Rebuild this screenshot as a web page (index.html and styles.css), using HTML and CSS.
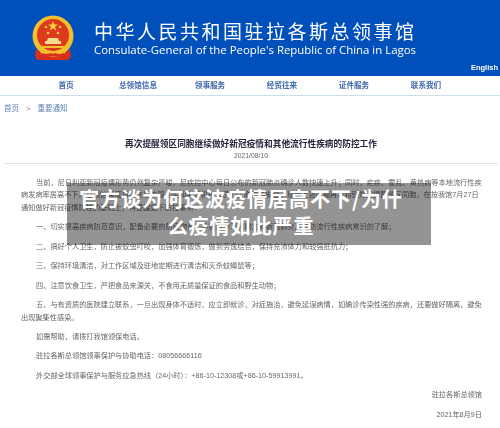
FILE: index.html
```html
<!DOCTYPE html>
<html lang="zh-CN">
<head>
    <meta charset="UTF-8">
    <title>再次提醒领区同胞继续做好新冠疫情和其他流行性疾病的防控工作</title>
    <link rel="stylesheet" href="styles.css">
</head>
<body>
    <header class="banner">
        <svg class="emblem" viewBox="0 0 42 46" width="42" height="46">
            <path d="M9 36 L3 42 L6 45 L36 45 L39 42 L33 36 Z" fill="#d8301c"/>
            <circle cx="21" cy="21" r="20.5" fill="#f3c02c"/>
            <circle cx="21" cy="20" r="16" fill="#dc3a1e"/>
            <polygon points="21,6 22.2,9.6 26,9.6 23,11.8 24.1,15.4 21,13.2 17.9,15.4 19,11.8 16,9.6 19.8,9.6" fill="#f7d23a"/>
            <circle cx="14" cy="12" r="1.3" fill="#f7d23a"/>
            <circle cx="28" cy="12" r="1.3" fill="#f7d23a"/>
            <circle cx="16" cy="18" r="1.3" fill="#f7d23a"/>
            <circle cx="26" cy="18" r="1.3" fill="#f7d23a"/>
            <path d="M16 23 H26 L27 26 H29 V29 H13 V26 H15 Z" fill="#f6dc8c"/>
            <path d="M9 31 H33 V33 H9 Z" fill="#f3c02c"/>
            <path d="M4 34 Q12 42 21 37 Q30 42 38 34 L39 41 H3 Z" fill="#d8301c"/>
            <path d="M9 38 Q15 34 21 38 Q27 34 33 38" fill="none" stroke="#f3c02c" stroke-width="1.6"/>
        </svg>
        <div class="banner-text">
            <div class="cn-name">中华人民共和国驻拉各斯总领事馆</div>
            <div class="en-name">Consulate-General of the People's Republic of China in Lagos</div>
        </div>
        <a class="lang" href="#">English</a>
    </header>

    <nav class="nav">
        <a href="#">首页</a>
        <a href="#">总领馆信息</a>
        <a href="#">领事服务</a>
        <a href="#">经贸往来</a>
        <a href="#">证件服务</a>
        <a href="#">联系我们</a>
    </nav>

    <div class="crumbs"><a href="#">首页</a><span class="sep">&gt;</span><a href="#">重要通知</a></div>

    <main class="article">
        <h1>再次提醒领区同胞继续做好新冠疫情和其他流行性疾病的防控工作</h1>
        <div class="date">2021/08/10</div>
        <div class="content">
            <p>当前&#65292;尼日利亚新冠疫情形势仍然复杂严峻&#65292;尼疾控中心每日公布的新冠肺炎确诊人数快速上升&#65307;同时&#65292;疟疾、霍乱、黄热病等本地流行性疾病发病率居高不下。总领馆高度重视在尼中国公民和中资机构人员的生命健康安全&#65292;现就上述问题再次特别郑重提醒领区同胞&#65292;在按我馆7月27日通知做好新冠疫情防控的基础上&#65292;再提醒如下防控事项&#65306;</p>
            <p>一、切实提高疾病防范意识&#65292;配备必要的防疫物资&#65292;多渠道学习和增加对新冠肺炎及预防流行性疾病常识的了解&#65307;</p>
            <p>二、搞好个人卫生&#65292;防止被蚊虫叮咬&#65292;加强体育锻炼&#65292;做到劳逸结合&#65292;保持充沛体力和较强抵抗力&#65307;</p>
            <p>三、保持环境清洁&#65292;对工作区域及驻地定期进行清洁和灭杀蚊蝇鼠等&#65307;</p>
            <p>四、注意饮食卫生&#65292;严把食品来源关&#65292;不食用无质量保证的食品和野生动物&#65307;</p>
            <p>五、与有资质的医院建立联系&#65292;一旦出现身体不适时&#65292;应立即就诊&#65292;对症施治&#65292;避免延误病情&#65292;如确诊传染性强的疾病&#65292;还要做好隔离&#65292;避免出现聚集性感染。</p>
            <p>如需帮助&#65292;请拨打我馆领保电话。</p>
            <p>驻拉各斯总领馆领事保护与协助电话&#65306;08056666116</p>
            <p>外交部全球领事保护与服务应急热线&#65288;24小时&#65289;&#65306;+86-10-12308或+86-10-59913991。</p>
            <p class="sign">驻拉各斯总领馆</p>
            <p class="sign">2021年8月9日</p>
        </div>
    </main>

    <div class="overlay">官方谈为何这波疫情居高不下/为什么疫情如此严重</div>
</body>
</html>
```

FILE: styles.css
```css
html, body {
    margin: 0;
    padding: 0;
}
body {
    position: relative;
    width: 500px;
    height: 428px;
    overflow: hidden;
    background: #fff;
    font-family: "Liberation Sans", "Noto Sans CJK SC", sans-serif;
}
a {
    color: inherit;
    text-decoration: none;
}
.banner {
    position: relative;
    display: flex;
    align-items: flex-start;
    height: 76px;
    box-sizing: border-box;
    padding: 15px 0 0 32px;
    background: #0050bb;
    color: #fff;
    filter: blur(0.3px);
}
.emblem {
    flex: none;
}
.banner-text {
    margin-left: 20px;
    font-family: "Open Sans", "Noto Sans CJK SC", sans-serif;
}
.cn-name {
    font-family: "Noto Sans CJK SC", sans-serif;
    font-size: 19px;
    line-height: 24px;
    letter-spacing: 2.5px;
    margin-top: 4px;
    white-space: nowrap;
}
.en-name {
    font-size: 11.4px;
    line-height: 14px;
    white-space: nowrap;
}
.lang {
    position: absolute;
    right: 2px;
    top: 63px;
    font-size: 7.5px;
    font-weight: bold;
    line-height: 10px;
}
.nav {
    display: grid;
    grid-template-columns: repeat(6, 72px);
    height: 18px;
    margin-top: 1px;
    padding-left: 30px;
    border-bottom: 1px solid #c8e0ea;
    font-size: 7.6px;
    font-weight: bold;
    line-height: 18px;
    text-align: center;
    color: #3f68ad;
    filter: blur(0.3px);
}
.crumbs {
    padding: 7px 0 0 4px;
    font-size: 7.5px;
    line-height: 12px;
    color: #5d7fb5;
    filter: blur(0.3px);
}
.sep {
    margin: 0 7px;
    color: #888;
}
.article {
    margin: 0 2px 0 4px;
    filter: blur(0.4px);
}
.article h1 {
    margin: 23px 0 0;
    font-family: "Liberation Serif", "Noto Sans CJK SC", serif;
    font-size: 8.7px;
    line-height: 12px;
    text-align: center;
    color: #2a2340;
}
.date {
    font-size: 6.8px;
    line-height: 11px;
    text-align: center;
    color: #666;
}
.content {
    margin-top: 2px;
    padding: 6px 16px 0 17px;
    border-top: 1px solid #e4e4e4;
    font-size: 7.2px;
    line-height: 12.6px;
    color: #666;
}
.content p {
    margin: 6.8px 0 0;
    text-indent: 15px;
}
.content .sign {
    margin-top: 7.2px;
    text-align: right;
    text-indent: 0;
}
.overlay {
    position: absolute;
    left: 67px;
    top: 183px;
    width: 364px;
    height: 62px;
    box-sizing: border-box;
    padding: 2px 24px 0 8px;
    background: rgba(0, 0, 0, 0.42);
    font-family: "Noto Sans CJK SC", sans-serif;
    font-size: 20px;
    font-weight: bold;
    line-height: 27px;
    letter-spacing: 1px;
    text-align: center;
    color: #fff;
}
```
